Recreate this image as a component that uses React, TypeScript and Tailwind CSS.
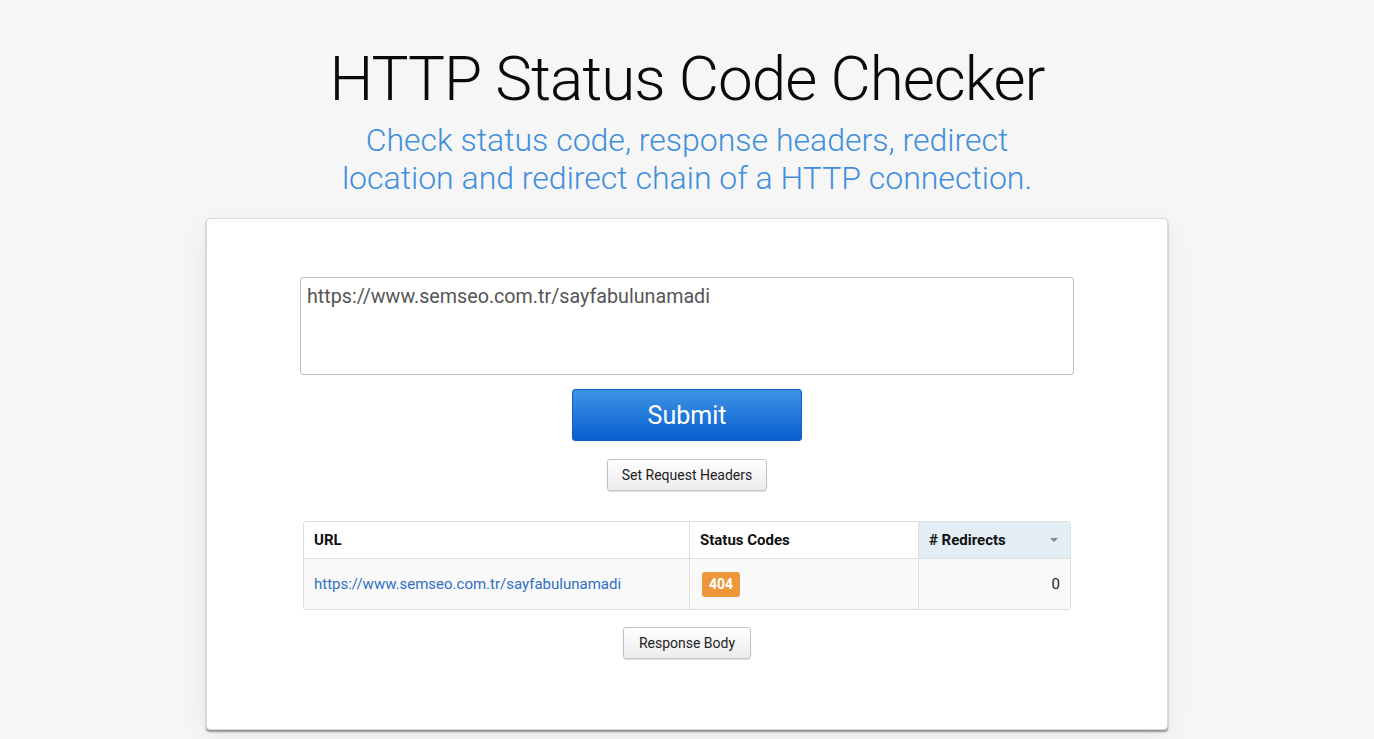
export default function App() {
  return (
    <main
      className="min-h-screen bg-[#f6f6f6] flex flex-col items-center pt-[41px]"
      style={{ fontFamily: "Roboto, 'Liberation Sans', sans-serif" }}
    >
      <h1 className="text-[62px] leading-[76px] font-light text-[#0a0a0a] tracking-[-1px]">
        HTTP Status Code Checker
      </h1>
      <p className="text-[32px] leading-[38px] font-light text-[#3f8fdc] text-center mt-[4px]">
        Check status code, response headers, redirect
        <br />
        location and redirect chain of a HTTP connection.
      </p>

      <div className="mt-[21px] w-[962px] h-[512px] bg-white border border-[#d9d9d9] rounded-[4px] shadow-[0_2px_2px_rgba(0,0,0,0.4),0_8px_30px_rgba(0,0,0,0.06)] flex flex-col items-center pt-[58px]">
        <textarea
          className="w-[774px] h-[98px] border border-[#bdbdbd] rounded-[3px] px-[6px] py-[8px] text-[19.7px] leading-[22px] text-[#555] resize-none outline-none"
          defaultValue="https://www.semseo.com.tr/sayfabulunamadi"
        />

        <button className="mt-[14px] w-[230px] h-[52px] rounded-[3px] border border-[#0b5fc6] bg-gradient-to-b from-[#3d93e3] to-[#065ed0] text-white text-[25px] leading-none">
          Submit
        </button>

        <button className="mt-[18px] h-[32px] px-[14px] rounded-[3px] border border-[#c4c4c4] bg-gradient-to-b from-white to-[#ececec] shadow-[0_1px_1px_rgba(0,0,0,0.12)] text-[14px] text-[#222]">
          Set Request Headers
        </button>

        <div className="mt-[30px] w-[768px] border border-[#dedede] rounded-[3px] overflow-hidden text-[15px]">
          <div className="grid grid-cols-[385px_229px_1fr] h-[37px] border-b border-[#dedede] font-bold text-[#111]">
            <div className="flex items-center px-[10px]">URL</div>
            <div className="flex items-center px-[10px] border-l border-[#dedede]">Status Codes</div>
            <div className="flex items-center justify-between px-[10px] border-l border-[#dedede] bg-[#e2eef4]">
              <span># Redirects</span>
              <span className="w-0 h-0 border-l-[4px] border-r-[4px] border-t-[4px] border-l-transparent border-r-transparent border-t-[#888] mr-[2px]" />
            </div>
          </div>
          <div className="grid grid-cols-[385px_229px_1fr] h-[50px] bg-[#f9f9f9]">
            <div className="flex items-center px-[10px] text-[#2f6fc6]">
              https://www.semseo.com.tr/sayfabulunamadi
            </div>
            <div className="flex items-center px-[12px] border-l border-[#dedede]">
              <span className="bg-[#f0963a] text-white font-bold text-[14px] rounded-[3px] px-[7px] h-[25px] flex items-center">
                404
              </span>
            </div>
            <div className="flex items-center justify-end px-[10px] border-l border-[#dedede] text-[#222]">
              0
            </div>
          </div>
        </div>

        <button className="mt-[17px] h-[32px] px-[15px] rounded-[3px] border border-[#c4c4c4] bg-gradient-to-b from-white to-[#ececec] shadow-[0_1px_1px_rgba(0,0,0,0.12)] text-[14px] text-[#222]">
          Response Body
        </button>
      </div>
    </main>
  );
}
